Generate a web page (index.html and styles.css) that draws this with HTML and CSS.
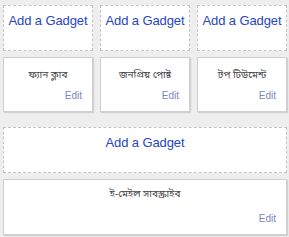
FILE: index.html
```html
<!DOCTYPE html>
<html lang="bn">
<head>
  <meta charset="UTF-8">
  <title>Layout</title>
  <link rel="stylesheet" href="styles.css">
</head>
<body>
  <div class="layout">
    <div class="columns">
      <div class="column">
        <div class="add-gadget"><a href="#">Add a Gadget</a></div>
        <div class="widget">
          <div class="widget-title">ফ্যান ক্লাব</div>
          <a class="edit-link" href="#">Edit</a>
        </div>
      </div>
      <div class="column">
        <div class="add-gadget"><a href="#">Add a Gadget</a></div>
        <div class="widget">
          <div class="widget-title">জনপ্রিয় পোষ্ট</div>
          <a class="edit-link" href="#">Edit</a>
        </div>
      </div>
      <div class="column">
        <div class="add-gadget"><a href="#">Add a Gadget</a></div>
        <div class="widget">
          <div class="widget-title">টপ টিউমেন্ট</div>
          <a class="edit-link" href="#">Edit</a>
        </div>
      </div>
    </div>

    <div class="wide">
      <div class="add-gadget"><a href="#">Add a Gadget</a></div>
      <div class="widget widget-wide">
        <div class="widget-title">ই-মেইল সাবস্ক্রাইব</div>
        <a class="edit-link" href="#">Edit</a>
      </div>
      <div class="widget widget-next"></div>
    </div>
  </div>
</body>
</html>
```

FILE: styles.css
```css
/* Page */
body {
  margin: 0;
  padding: 0;
  background-color: #eeeeee;
  font-family: "Liberation Sans", Arial, sans-serif;
}
.layout {
  box-sizing: border-box;
  height: 237px;
  overflow: hidden;
  padding: 5px 2px 0 3px;
}
/* Three columns */
.columns {
  display: grid;
  grid-template-columns: 90px 90px 90px;
  column-gap: 7px;
}
.column {
  display: flex;
  flex-direction: column;
  gap: 6px;
}
.wide {
  margin-top: 15px;
  width: 284px;
  display: flex;
  flex-direction: column;
  gap: 6px;
}
/* Add a Gadget box */
.add-gadget {
  box-sizing: border-box;
  height: 46px;
  border: 1px dashed #c4c4c4;
  background-color: #ffffff;
  text-align: center;
  padding-top: 5px;
}
.add-gadget a {
  color: #2746c4;
  font-size: 13px;
  line-height: 16px;
  letter-spacing: -0.1px;
  text-decoration: none;
}
/* Widget box */
.widget {
  box-sizing: border-box;
  height: 55px;
  border: 1px solid #cfcfcf;
  background-color: #ffffff;
  box-shadow: 1px 1px 1px rgba(0, 0, 0, 0.12);
  display: flex;
  flex-direction: column;
  justify-content: space-between;
  padding: 11px 10px 9px;
}
.widget-wide {
  height: 56px;
  padding-top: 8px;
}
.widget-next {
  flex-shrink: 0;
  height: 20px;
}
.widget-title {
  text-align: center;
  font-family: "Noto Sans Bengali", "Lohit Bengali", "Noto Sans", sans-serif;
  font-size: 10px;
  line-height: 14px;
  color: #444444;
}
.edit-link {
  align-self: flex-end;
  color: #7a86c2;
  font-size: 10px;
  line-height: 12px;
  text-decoration: none;
}
```
